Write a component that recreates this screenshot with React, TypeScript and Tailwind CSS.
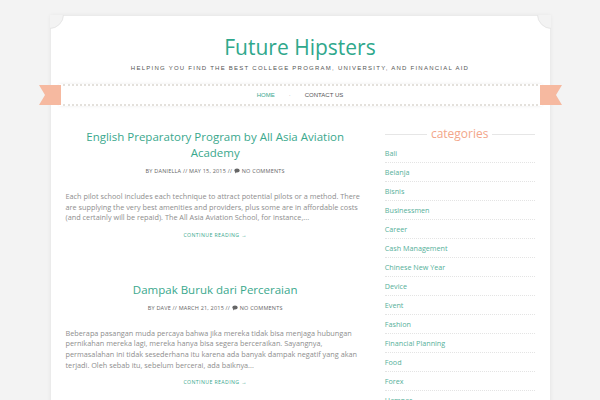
import React from 'react'

const posts = [
  {
    title: 'English Preparatory Program by All Asia Aviation Academy',
    author: 'DANIELLA',
    date: 'MAY 15, 2015',
    excerpt:
      'Each pilot school includes each technique to attract potential pilots or a method. There are supplying the very best amenities and providers, plus some are in affordable costs (and certainly will be repaid). The All Asia Aviation School, for instance,...',
  },
  {
    title: 'Dampak Buruk dari Perceraian',
    author: 'DAVE',
    date: 'MARCH 21, 2015',
    excerpt:
      'Beberapa pasangan muda percaya bahwa jika mereka tidak bisa menjaga hubungan pernikahan mereka lagi, mereka hanya bisa segera berceraikan. Sayangnya, permasalahan ini tidak sesederhana itu karena ada banyak dampak negatif yang akan terjadi. Oleh sebab itu, sebelum bercerai, ada baiknya...',
  },
]

const categories = [
  'Bali',
  'Belanja',
  'Bisnis',
  'Businessmen',
  'Career',
  'Cash Management',
  'Chinese New Year',
  'Device',
  'Event',
  'Fashion',
  'Financial Planning',
  'Food',
  'Forex',
  'Hamper',
]

function CommentIcon() {
  return (
    <svg viewBox="0 0 10 9" className="inline-block w-[6px] h-[6px] mr-[2px] -mt-[1px] align-middle">
      <path d="M5 0.5C2.5 0.5 0.5 2 0.5 3.8c0 1 .6 1.9 1.6 2.5L1.6 8.5 4 7c.3 0 .6.1 1 .1 2.5 0 4.5-1.5 4.5-3.3S7.5.5 5 .5z" fill="#666" />
    </svg>
  )
}

function Ribbon({ side }: { side: 'left' | 'right' }) {
  const points = side === 'left' ? '0,0 22,0 22,20 0,20 6,10' : '0,0 22,0 16,10 22,20 0,20'
  return (
    <svg
      viewBox="0 0 22 20"
      className={
        side === 'left'
          ? 'absolute -left-[20px] top-[1px] w-[22px] h-[20px]'
          : 'absolute -right-[20px] top-[1px] w-[22px] h-[20px]'
      }
    >
      <polygon points={points} fill="#f6b9a0" />
    </svg>
  )
}

export default function App() {
  return (
    <div className="min-h-screen bg-[#f3f3f3] pt-[15px] font-['Open_Sans',sans-serif]">
      <div className="relative mx-auto w-[501px] bg-white border border-[#ebebeb] shadow-[0_0_4px_rgba(0,0,0,0.05)]">
        {/* notched corners */}
        <div className="absolute -inset-px overflow-hidden pointer-events-none">
          <div className="absolute -left-[15px] -top-[15px] w-[29px] h-[29px] rounded-full bg-[#f3f3f3] border border-[#e6e6e6]" />
          <div className="absolute -right-[15px] -top-[15px] w-[29px] h-[29px] rounded-full bg-[#f3f3f3] border border-[#e6e6e6]" />
        </div>

        <header className="relative pt-[17px] text-center">
          <h1 className="text-[21px] leading-[28px] text-[#2fa88c]">Future Hipsters</h1>
          <p className="mt-[3px] text-[6px] leading-[8px] tracking-[1.25px] text-[#555] font-['Liberation_Sans',sans-serif]">
            HELPING YOU FIND THE BEST COLLEGE PROGRAM, UNIVERSITY, AND FINANCIAL AID
          </p>
        </header>

        <nav className="relative mx-[8px] mt-[12px] bg-white shadow-[0_0_3px_rgba(0,0,0,0.08)]">
          <Ribbon side="left" />
          <Ribbon side="right" />
          <div className="relative mx-[4px] h-[22px] border-y-2 border-dotted border-[#e4e1dc] flex items-center justify-center gap-[14px] text-[6px] font-['Liberation_Sans',sans-serif]">
            <span className="text-[#3aa88d]">HOME</span>
            <span className="text-[#aaa]">·</span>
            <span className="text-[#555]">CONTACT US</span>
          </div>
        </nav>

        <div className="flex gap-[20px] px-[15px] pt-[23px]">
          <main className="w-[300px]">
            {posts.map((p, i) => (
              <article key={i} className={i === 0 ? 'text-center' : 'text-center mt-[43px]'}>
                <h2 className="text-[11.5px] leading-[16px] text-[#3aa88d] px-[20px]">{p.title}</h2>
                <p className="mt-[6px] text-[5.5px] leading-[8px] text-[#666] tracking-[0.2px]">
                  BY {p.author} // {p.date} // <CommentIcon />NO COMMENTS
                </p>
                <p className="mt-[16px] text-left text-[7.3px] leading-[10.6px] text-[#8e8e8e]">{p.excerpt}</p>
                <p className="mt-[8px] text-[5.2px] leading-[8px] text-[#3aa88d] tracking-[0.4px]">CONTINUE READING →</p>
              </article>
            ))}
          </main>

          <aside className="w-[150px]">
            <div className="flex items-center gap-[4px] -mt-[3px]">
              <div className="flex-1 h-px bg-[#e6e6e6]" />
              <span className="text-[12px] leading-[16px] text-[#f3a68a]">categories</span>
              <div className="flex-1 h-px bg-[#e6e6e6]" />
            </div>
            <ul className="mt-[2px]">
              {categories.map((c) => (
                <li
                  key={c}
                  className="h-[19px] flex items-center border-b border-dotted border-[#e4e4e4] text-[7.2px] text-[#55b09a]"
                >
                  {c}
                </li>
              ))}
            </ul>
          </aside>
        </div>
        <div className="h-[40px]" />
      </div>
    </div>
  )
}
